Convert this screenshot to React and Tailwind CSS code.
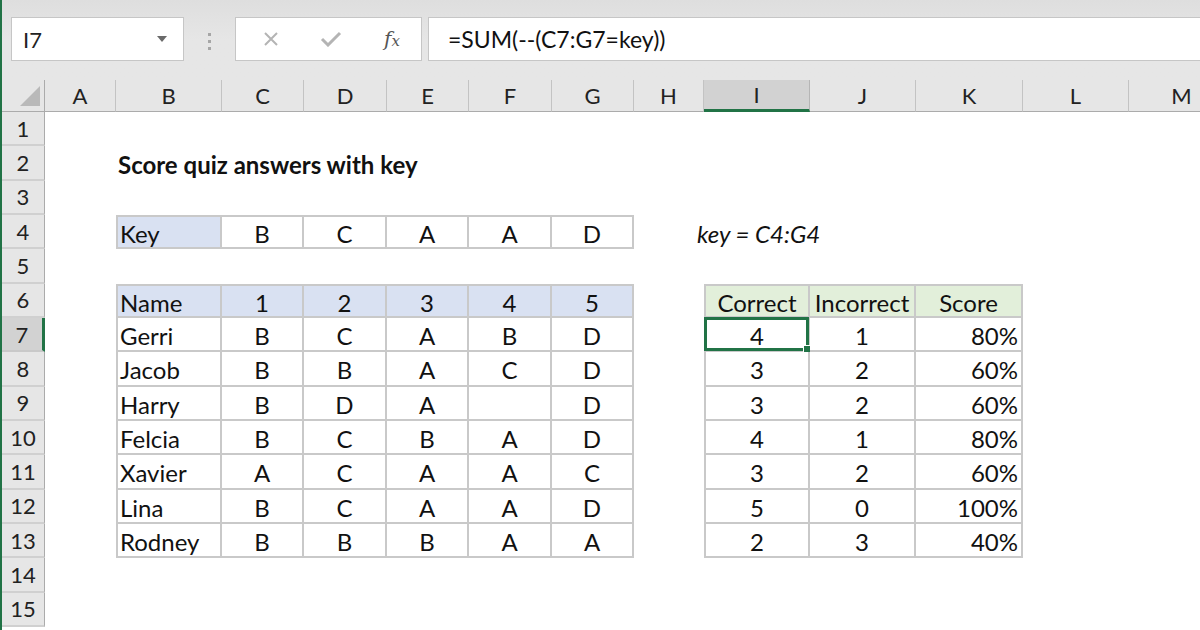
import React from "react";

const COLS = [
  { id: "A", w: 71 },
  { id: "B", w: 106 },
  { id: "C", w: 82 },
  { id: "D", w: 83 },
  { id: "E", w: 82 },
  { id: "F", w: 83 },
  { id: "G", w: 82 },
  { id: "H", w: 70 },
  { id: "I", w: 106 },
  { id: "J", w: 106 },
  { id: "K", w: 107 },
  { id: "L", w: 106 },
  { id: "M", w: 106 },
];

const people = [
  ["Gerri", "B", "C", "A", "B", "D", 4, 1, "80%"],
  ["Jacob", "B", "B", "A", "C", "D", 3, 2, "60%"],
  ["Harry", "B", "D", "A", "", "D", 3, 2, "60%"],
  ["Felcia", "B", "C", "B", "A", "D", 4, 1, "80%"],
  ["Xavier", "A", "C", "A", "A", "C", 3, 2, "60%"],
  ["Lina", "B", "C", "A", "A", "D", 5, 0, "100%"],
  ["Rodney", "B", "B", "B", "A", "A", 2, 3, "40%"],
];

// what goes in a cell: text + alignment + fill
function getCell(r, c) {
  if (r === 2 && c === 1) return { text: "Score quiz answers with key", bold: true };
  if (r === 4) {
    if (c === 1) return { text: "Key", fill: "blue" };
    if (c >= 2 && c <= 6) return { text: ["B", "C", "A", "A", "D"][c - 2], align: "center" };
    if (c === 7) return { text: "key = C4:G4", italic: true };
  }
  if (r === 6) {
    if (c === 1) return { text: "Name", fill: "blue" };
    if (c >= 2 && c <= 6) return { text: String(c - 1), align: "center", fill: "blue" };
    if (c === 8) return { text: "Correct", align: "center", fill: "green" };
    if (c === 9) return { text: "Incorrect", align: "center", fill: "green" };
    if (c === 10) return { text: "Score", align: "center", fill: "green" };
  }
  if (r >= 7 && r <= 13) {
    const p = people[r - 7];
    if (c === 1) return { text: p[0] };
    if (c >= 2 && c <= 6) return { text: p[c - 1], align: "center" };
    if (c === 8) return { text: String(p[6]), align: "center" };
    if (c === 9) return { text: String(p[7]), align: "center" };
    if (c === 10) return { text: p[8], align: "right" };
  }
  return null;
}

function tableInfo(r, c) {
  const left = r >= 6 && r <= 13 && c >= 1 && c <= 6;
  const key = r === 4 && c >= 1 && c <= 6;
  const right = r >= 6 && r <= 13 && c >= 8 && c <= 10;
  return {
    inTable: left || key || right,
    top: key || (r === 6 && (left || right)),
    leftEdge: (c === 1 && (left || key)) || (c === 8 && right),
  };
}

function Cell({ r, c, w }) {
  const cell = getCell(r, c);
  const t = tableInfo(r, c);
  const active = r === 7 && c === 8;
  return (
    <div
      style={{ width: w }}
      className={[
        "relative flex h-full shrink-0 items-center",
        t.inTable ? "border-r-2 border-b-2 border-[#c9c9c9]" : "",
        t.top ? "border-t-2" : "",
        t.leftEdge ? "border-l-2" : "",
        cell && cell.fill === "blue" ? "bg-[#d9e1f2]" : "",
        cell && cell.fill === "green" ? "bg-[#e2efda]" : "",
        cell && cell.align === "center" ? "justify-center" : "",
        cell && cell.align === "right" ? "justify-end pr-[3px]" : "",
        cell && !cell.align ? "pl-[2px]" : "",
      ].join(" ")}
    >
      {cell && (
        <span
          className={[
            "translate-y-[2px] whitespace-nowrap text-[24px] leading-none text-[#111]",
            cell.bold ? "font-bold text-[23.5px]" : "",
            cell.italic ? "italic pl-[61px]" : "",
          ].join(" ")}
        >
          {cell.text}
        </span>
      )}
      {active && (
        <div className="absolute -top-[1px] -left-[2px] -right-[1px] -bottom-[1px] border-[3px] border-[#217346]">
          <div className="absolute -right-[5px] -bottom-[5px] h-[8px] w-[8px] border border-white bg-[#217346]" />
        </div>
      )}
    </div>
  );
}

function Toolbar() {
  return (
    <div className="flex h-[80px] items-start bg-gradient-to-b from-[#dedede] via-[#e6e6e6] to-[#e6e6e6] pt-[17px]">
      <div className="ml-[9px] flex h-[44px] w-[173px] items-center justify-between border border-[#c6c6c6] bg-white pl-[11px] pr-[16px]">
        <span className="text-[22px] text-[#222]">I7</span>
        <svg width="10" height="6" viewBox="0 0 10 6">
          <path d="M0 0h10L5 6z" fill="#6a6a6a" />
        </svg>
      </div>
      <div className="ml-[24px] mt-[16px] flex flex-col gap-[4px]">
        <div className="h-[3px] w-[3px] bg-[#a6a6a6]" />
        <div className="h-[3px] w-[3px] bg-[#a6a6a6]" />
        <div className="h-[3px] w-[3px] bg-[#a6a6a6]" />
      </div>
      <div className="ml-[24px] flex h-[44px] w-[187px] items-center border border-[#c6c6c6] bg-white">
        <svg className="ml-[27px]" width="16" height="16" viewBox="0 0 16 16">
          <path d="M2 2l12 12M14 2L2 14" stroke="#b4b4b4" strokeWidth="2" />
        </svg>
        <svg className="ml-[41px]" width="22" height="16" viewBox="0 0 22 16">
          <path d="M2 8l6 6L20 2" stroke="#b4b4b4" strokeWidth="3" fill="none" />
        </svg>
        <span className="ml-[42px] font-['DejaVu_Serif',serif] text-[20px] italic text-[#555]">
          f<span className="text-[15px]">x</span>
        </span>
      </div>
      <div className="ml-[6px] flex h-[44px] flex-1 items-center border border-r-0 border-[#c6c6c6] bg-white pl-[19px]">
        <span className="text-[23px] text-[#111]">=SUM(--(C7:G7=key))</span>
      </div>
    </div>
  );
}

export default function App() {
  const rows = Array.from({ length: 15 }, (_, i) => i + 1);
  return (
    <div className="h-[630px] w-[1200px] overflow-hidden border-l-2 border-[#217346] bg-white font-['Lato',sans-serif]">
      <Toolbar />
      {/* column headers */}
      <div className="flex h-[32px] bg-[#e6e6e6]">
        <div className="relative h-full w-[43px] shrink-0 border-r border-b border-[#ababab]">
          <svg className="absolute left-[18px] top-[6px]" width="20" height="20" viewBox="0 0 20 20">
            <path d="M20 0v20H0z" fill="#b9b9b9" />
          </svg>
        </div>
        {COLS.map((col) =>
          col.id === "I" ? (
            <div
              key={col.id}
              style={{ width: col.w }}
              className="flex h-full shrink-0 items-center justify-center border-r border-b-[3px] border-r-[#b5b5b5] border-b-[#217346] bg-[#d2d2d2] text-[22px] text-[#222]"
            >
              {col.id}
            </div>
          ) : (
            <div
              key={col.id}
              style={{ width: col.w }}
              className="flex h-full shrink-0 items-center justify-center border-r border-b border-r-[#c3c3c3] border-b-[#ababab] text-[22px] text-[#222]"
            >
              {col.id}
            </div>
          )
        )}
      </div>
      {/* sheet */}
      {rows.map((r) => (
        <div key={r} className="flex h-[34.33px]">
          {r === 7 ? (
            <div className="flex h-full w-[43px] shrink-0 items-center justify-center border-r-[3px] border-b-2 border-r-[#217346] border-b-[#c9c9c9] bg-[#d2d2d2] text-[22px] text-[#222]">
              {r}
            </div>
          ) : (
            <div className="flex h-full w-[43px] shrink-0 items-center justify-center border-r border-b-2 border-r-[#ababab] border-b-[#d0d0d0] bg-[#e6e6e6] text-[22px] text-[#222]">
              {r}
            </div>
          )}
          {COLS.map((col, c) => (
            <Cell key={col.id} r={r} c={c} w={col.w} />
          ))}
        </div>
      ))}
    </div>
  );
}
